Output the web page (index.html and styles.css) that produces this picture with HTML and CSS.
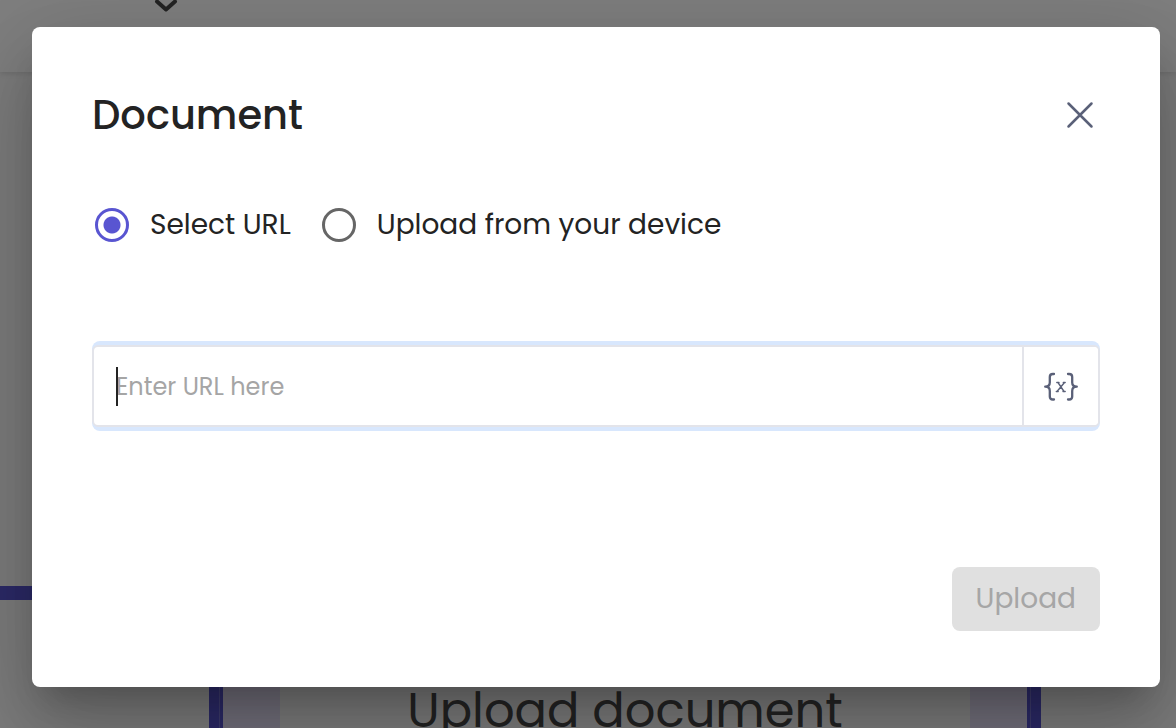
FILE: index.html
```
<!DOCTYPE html>
<html lang="en">
<head>
<meta charset="utf-8">
<meta name="viewport" content="width=device-width, initial-scale=1">
<title>Document</title>
<link rel="stylesheet" href="styles.css">
</head>
<body>
<div class="page" aria-hidden="true">
  <div class="topbar">
    <svg class="chevron" width="26" height="16" viewBox="0 0 26 16" fill="none" stroke="#484848" stroke-width="4" stroke-linecap="round" stroke-linejoin="round"><path d="M4 1.500l9 8 9-8"/></svg>
  </div>
  <div class="canvas">
    <div class="connector"></div>
    <div class="node"><p class="node-title">Upload document</p></div>
  </div>
</div>
<div class="backdrop">
  <form class="dialog" role="dialog" aria-modal="true" aria-labelledby="title">
    <header class="dialog-head">
      <h1 class="title" id="title">Document</h1>
      <button class="close" type="button" aria-label="Close">
        <svg width="40" height="40" viewBox="0 0 40 40" fill="none" stroke="#5a6078" stroke-width="2.5" stroke-linecap="round"><path d="M8.500 8.500l23 23M31.500 8.500l-23 23"/></svg>
      </button>
    </header>
    <div class="choices">
      <label class="choice"><input class="radio" type="radio" name="source" checked><span>Select URL</span></label>
      <label class="choice"><input class="radio" type="radio" name="source"><span>Upload from your device</span></label>
    </div>
    <div class="field">
      <div class="field-box">
        <div class="entry"><input class="url" type="text" aria-label="URL" placeholder="Enter URL here"></div>
        <button class="variable" type="button" aria-label="Insert variable">
          <svg width="36" height="30" viewBox="0 0 36 30" fill="none" stroke="#5a6078" stroke-width="2.3" stroke-linecap="round" stroke-linejoin="round"><path d="M11 3H9.800C7.800 3 6.800 4.200 6.800 6v5.500c0 2.300-1 4.200-4.600 4.200 3.600 0 4.600 2 4.600 4.300V25.500c0 1.800 1 3 3 3H11M25 3h1.200c2 0 3 1.200 3 3v5.500c0 2.300 1 4.200 4.600 4.200-3.600 0-4.600 2-4.600 4.300V25.500c0 1.800-1 3-3 3H25"/><path stroke-width="1.400" d="M15 11.500l6 9M21.500 11.500l-7.500 9M13.800 11.500h2.200M20.300 11.500h1.900M13.300 20.500h1.900M20 20.500h2.200"/></svg>
        </button>
      </div>
    </div>
    <footer class="actions"><button class="upload" type="submit" disabled>Upload</button></footer>
  </form>
</div>
</body>
</html>
```
FILE: styles.css
```
* { box-sizing: border-box; }
body {
  margin: 0;
  min-height: 100vh;
  overflow: hidden;
  color: #232323;
  font-family: Poppins, Inter, "Liberation Sans", sans-serif;
  -webkit-font-smoothing: antialiased;
}
button, input { font: inherit; }
.page {
  position: fixed;
  inset: 0;
  display: flex;
  flex-direction: column;
  background: #fafafa;
}
.topbar {
  height: 72px;
  flex: none;
  padding-left: 153px;
  background: #fff;
  box-shadow: 0 1px 6px rgba(0, 0, 0, .14);
  z-index: 1;
}
.chevron { display: block; }
.canvas { position: relative; flex: 1; }
.connector {
  position: absolute;
  left: 0;
  top: 514px;
  width: 210px;
  height: 14px;
  background: #5955d1;
}
.node {
  position: absolute;
  left: 209px;
  right: 135px;
  top: 514px;
  height: 300px;
  padding: 79px 57px 0;
  border: 14px solid #5955d1;
  outline: 1px solid #7b77d8;
  outline-offset: -11px;
  background: linear-gradient(90deg, #e6e1f8 57px, #fafafa 57px calc(100% - 57px), #e6e1f8 calc(100% - 57px));
}
.node-title {
  margin: 0;
  color: #484848;
  font-size: 48px;
  font-weight: 400;
  line-height: 64px;
  text-align: center;
  white-space: nowrap;
}
.backdrop {
  position: fixed;
  inset: 0;
  display: flex;
  align-items: flex-start;
  padding: 27px 16px 41px 32px;
  background: rgba(0, 0, 0, .5);
}
.dialog {
  flex: 1;
  padding: 60px 60px 56px;
  border-radius: 8px;
  background: #fff;
  box-shadow: 0 22px 30px -14px rgba(0, 0, 0, .2), 0 48px 76px 6px rgba(0, 0, 0, .14), 0 18px 92px 16px rgba(0, 0, 0, .12);
}
.dialog-head {
  display: flex;
  align-items: center;
  justify-content: space-between;
  height: 56px;
}
.title {
  margin: 0;
  font-size: 40px;
  font-weight: 500;
  line-height: 56px;
}
.close {
  display: flex;
  padding: 0;
  border: 0;
  background: none;
}
.choices {
  display: flex;
  gap: 31px;
  margin-top: 60px;
  padding-left: 3px;
}
.choice {
  display: flex;
  align-items: center;
  gap: 21px;
  font-size: 28px;
  line-height: 44px;
}
.radio {
  appearance: none;
  width: 34px;
  height: 34px;
  margin: 0;
  border: 3px solid #666;
  border-radius: 50%;
}
.radio:checked {
  border-color: #5955d1;
  background: radial-gradient(circle, #5955d1 8px, transparent 9px);
}
.field {
  margin-top: 94px;
  padding: 4px 0;
  border-radius: 8px;
  background: #d8e7fd;
}
.field-box {
  display: flex;
  height: 82px;
  border: 2px solid #e3e4ea;
  border-radius: 6px;
  background: #fff;
}
.entry {
  position: relative;
  display: flex;
  flex: 1;
  align-items: center;
  padding: 0 22px;
}
.entry::before {
  content: "";
  position: absolute;
  left: 22px;
  top: 20px;
  width: 2px;
  height: 39px;
  background: #232323;
}
.url {
  width: 100%;
  padding: 0;
  border: 0;
  outline: 0;
  background: none;
  font-size: 24px;
}
.url::placeholder { color: #a5a5a5; opacity: 1; }
.variable {
  display: grid;
  place-items: center;
  width: 76px;
  padding: 0;
  border: 0;
  border-left: 2px solid #e3e4ea;
  border-radius: 0 4px 4px 0;
  background: #fff;
}
.actions {
  display: flex;
  justify-content: flex-end;
  margin-top: 136px;
}
.upload {
  min-width: 148px;
  height: 64px;
  padding: 0 24px;
  border: 0;
  border-radius: 8px;
  color: #a6a6a6;
  background: #e0e0e0;
  font-size: 28px;
}
```
